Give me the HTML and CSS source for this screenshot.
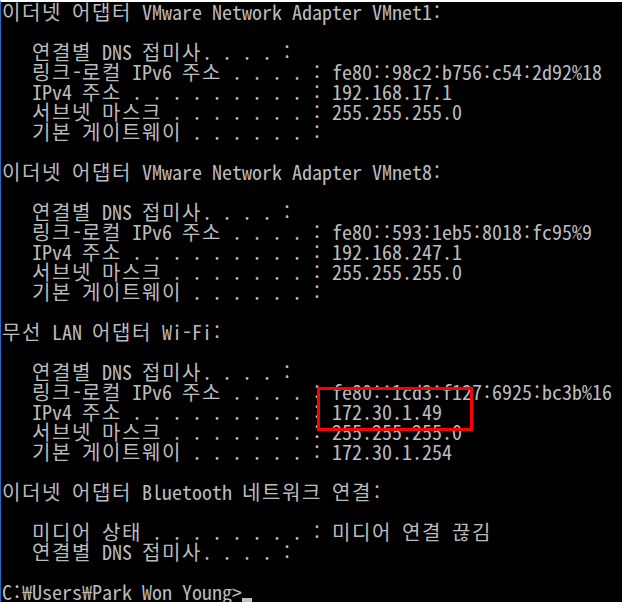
FILE: index.html
```html
<!DOCTYPE html>
<html lang="ko">
<head>
  <meta charset="UTF-8">
  <title>명령 프롬프트</title>
  <link rel="stylesheet" href="styles.css">
</head>
<body>

  <pre class="console"><span class="ko">이더넷</span> <span class="ko">어댑터</span> VMware Network Adapter VMnet1:

   <span class="ko">연결별</span> DNS <span class="ko">접미사</span>. . . . :
   <span class="ko">링크</span>-<span class="ko">로컬</span> IPv6 <span class="ko">주소</span> . . . . : fe80::98c2:b756:c54:2d92%18
   IPv4 <span class="ko">주소</span> . . . . . . . . . : 192.168.17.1
   <span class="ko">서브넷</span> <span class="ko">마스크</span> . . . . . . . : 255.255.255.0
   <span class="ko">기본</span> <span class="ko">게이트웨이</span> . . . . . . :

<span class="ko">이더넷</span> <span class="ko">어댑터</span> VMware Network Adapter VMnet8:

   <span class="ko">연결별</span> DNS <span class="ko">접미사</span>. . . . :
   <span class="ko">링크</span>-<span class="ko">로컬</span> IPv6 <span class="ko">주소</span> . . . . : fe80::593:1eb5:8018:fc95%9
   IPv4 <span class="ko">주소</span> . . . . . . . . . : 192.168.247.1
   <span class="ko">서브넷</span> <span class="ko">마스크</span> . . . . . . . : 255.255.255.0
   <span class="ko">기본</span> <span class="ko">게이트웨이</span> . . . . . . :

<span class="ko">무선</span> LAN <span class="ko">어댑터</span> Wi-Fi:

   <span class="ko">연결별</span> DNS <span class="ko">접미사</span>. . . . :
   <span class="ko">링크</span>-<span class="ko">로컬</span> IPv6 <span class="ko">주소</span> . . . . : fe80::1cd3:f127:6925:bc3b%16
   IPv4 <span class="ko">주소</span> . . . . . . . . . : <span class="mark">172.30.1.49</span>
   <span class="ko">서브넷</span> <span class="ko">마스크</span> . . . . . . . : 255.255.255.0
   <span class="ko">기본</span> <span class="ko">게이트웨이</span> . . . . . . : 172.30.1.254

<span class="ko">이더넷</span> <span class="ko">어댑터</span> Bluetooth <span class="ko">네트워크</span> <span class="ko">연결</span>:

   <span class="ko">미디어</span> <span class="ko">상태</span> . . . . . . . . : <span class="ko">미디어</span> <span class="ko">연결</span> <span class="ko">끊김</span>
   <span class="ko">연결별</span> DNS <span class="ko">접미사</span>. . . . :

C:₩Users₩Park Won Young&gt;<span class="cursor"></span></pre>

</body>
</html>
```

FILE: styles.css
```css
* { margin: 0; padding: 0; box-sizing: border-box; }
html, body { background: #000; }
body {
  height: 602px;
  overflow: hidden;
  border-top: 2px solid #fff;
  border-left: 1px solid #1e6fd0;
  padding-left: 1px;
}
.console {
  font-family: "Noto Sans Mono CJK KR", "Noto Sans CJK KR", monospace;
  font-size: 20px;
  line-height: 20px;
  color: #bcbcbc;
  white-space: pre;
}
/* hangul is 18.4px wide here, console cells are 20px */
.ko { letter-spacing: 1.6px; }
.mark {
  display: inline-block;
  position: relative;
  height: 20px;
}
.mark::after {
  content: "";
  position: absolute;
  left: -15px;
  top: -15px;
  width: 150px;
  height: 38px;
  border: 3px solid #f00;
}
.cursor {
  display: inline-block;
  width: 10px;
  height: 4px;
  background: #c0c0c0;
  vertical-align: -2px;
}
```
